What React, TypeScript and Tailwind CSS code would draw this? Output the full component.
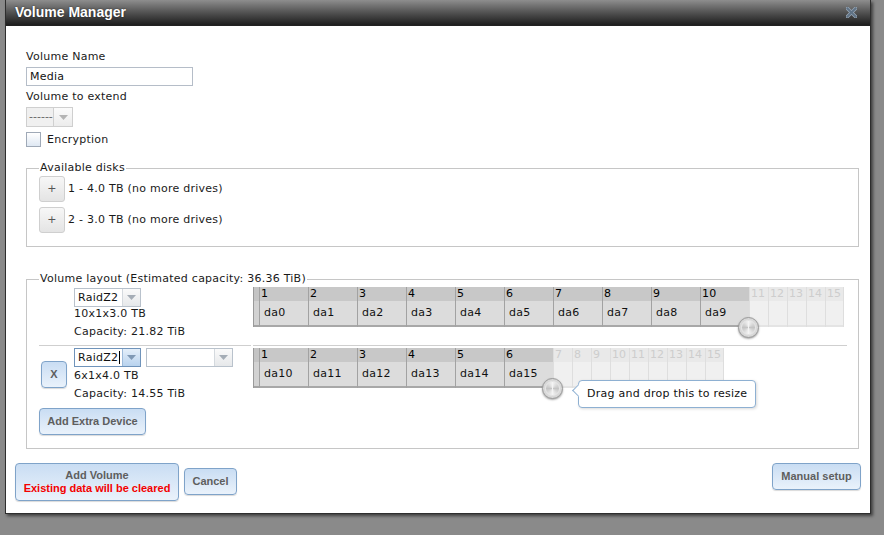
import React from 'react';

function Arrow({ color = '#9aa4ae' }: { color?: string }) {
  return (
    <svg width="9" height="5" viewBox="0 0 9 5">
      <path d="M0 0 L9 0 L4.5 5 Z" fill={color} />
    </svg>
  );
}

function Select({ text, wide, focused }: { text: string; wide?: boolean; focused?: boolean }) {
  return (
    <div
      className={
        'flex h-[19px] bg-white border ' +
        (wide ? 'w-[87px] ' : 'w-[67px] ') +
        (focused ? 'border-[#6f93ba]' : 'border-[#b9c2cc]')
      }
    >
      <div className="flex-1 flex items-center pl-[3px] leading-[17px] text-[#111]">
        {text}
        {focused && <span className="inline-block w-[1px] h-[13px] bg-black ml-[1px]" />}
      </div>
      <div
        className={
          'w-[18px] flex items-center justify-center border-l ' +
          (focused
            ? 'border-[#9dbbdb] bg-linear-to-b from-[#e4effa] to-[#b9d3ee]'
            : 'border-[#d4d9de] bg-linear-to-b from-[#fafafa] to-[#e6e8ea]')
        }
      >
        <Arrow color={focused ? '#7f99b5' : '#a5adb6'} />
      </div>
    </div>
  );
}

function BlueBtn({ children, cls }: { children: React.ReactNode; cls: string }) {
  return (
    <div
      className={
        "flex flex-col items-center justify-center rounded-[4px] border border-[#7fa3c9] bg-linear-to-b from-[#c9ddf3] to-[#eaf2fb] shadow-[0_1px_1px_rgba(0,0,0,0.15)] font-['Liberation_Sans',sans-serif] font-bold tracking-normal text-[11px] text-[#5e5e5e] whitespace-nowrap " +
        cls
      }
    >
      {children}
    </div>
  );
}

function GrayBtn({ children, cls }: { children: React.ReactNode; cls: string }) {
  return (
    <div
      className={
        'flex items-center justify-center rounded-[3px] border border-[#cfcfcf] bg-linear-to-b from-[#f7f7f7] to-[#e4e4e4] text-[#555] ' +
        cls
      }
    >
      {children}
    </div>
  );
}

function Knob({ left }: { left: number }) {
  return (
    <div
      className="absolute top-[30px] w-[21px] h-[21px] rounded-full border border-[#9c9c9c] bg-[#d8d8d8] shadow-[0_1px_2px_rgba(0,0,0,0.35)] flex items-center justify-center"
      style={{ left }}
    >
      <div className="w-[15px] h-[15px] rounded-full bg-[conic-gradient(#f4f4f4,#c4c4c4,#f4f4f4,#c4c4c4,#f4f4f4)] border border-[#e8e8e8]" />
    </div>
  );
}

function DiskGrid({
  names,
  total,
  tooltip,
}: {
  names: string[];
  total: number;
  tooltip?: boolean;
}) {
  const inactive: number[] = [];
  for (let i = names.length + 1; i <= total; i++) inactive.push(i);
  return (
    <div className="relative flex w-fit">
      <div className="w-[6px] flex flex-col border-l border-[#9a9a9a]">
        <div className="h-[14px] bg-[#c4c4c4]" />
        <div className="h-[24px] bg-[#d2d2d2]" />
        <div className="h-[2px] bg-[#a4a4a4]" />
      </div>
      {names.map((n, i) => (
        <div key={n} className="w-[49px] flex flex-col border-l border-[#a2a2a2]">
          <div className="h-[14px] bg-[#c8c8c8] leading-[14px] pl-[1px] text-black">{i + 1}</div>
          <div className="h-[24px] bg-[#dcdcdc] leading-[24px] pl-[4px] text-[#111]">{n}</div>
          <div className="h-[2px] bg-[#a8a8a8]" />
        </div>
      ))}
      {inactive.map((k, i) => (
        <div
          key={k}
          className={
            'w-[19px] flex flex-col border-l border-[#dedede] ' +
            (i === inactive.length - 1 ? 'border-r' : '')
          }
        >
          <div className="h-[14px] bg-[#e9e9e9] leading-[14px] pl-[1px] tracking-normal text-[#cdcdcd]">{k}</div>
          <div className="h-[24px] bg-[#f0f0f0]" />
          <div className="h-[2px] bg-[#e4e4e4]" />
        </div>
      ))}
      <Knob left={6 + names.length * 49 - 11} />
      {tooltip && (
        <div className="absolute left-[325px] top-[32px] w-[178px] h-[28px] rounded-[4px] border border-[#8eb0d2] bg-white shadow-[1px_1px_3px_rgba(0,0,0,0.15)] pl-[8px] leading-[26px] text-[#111] whitespace-nowrap">
          <div className="absolute left-[-5px] top-[5px] w-[9px] h-[9px] bg-white border-l border-b border-[#8eb0d2] rotate-45" />
          <span className="relative">Drag and drop this to resize</span>
        </div>
      )}
    </div>
  );
}

export default function App() {
  return (
    <div className="w-[884px] h-[535px] overflow-hidden bg-[#8a8a8a] pl-[5px] font-['DejaVu_Sans',sans-serif] text-[11px] tracking-[0.25px] text-[#1a1a1a]">
      <div className="w-[866px] h-[514px] bg-white border-l border-r border-b border-[#2e2e2e] shadow-[2px_2px_3px_rgba(0,0,0,0.55)] flex flex-col">
        {/* title bar */}
        <div className="h-[26px] shrink-0 bg-linear-to-b from-[#8e8e8e] to-[#1e1e1e] border-b border-[#222] flex items-center justify-between pl-[9px] pr-[13px]">
          <span className="text-white font-bold text-[14px] tracking-normal font-['Liberation_Sans',sans-serif] [text-shadow:0_0_2px_rgba(0,0,0,0.6)]">Volume Manager</span>
          <svg width="11" height="11" viewBox="0 0 11 11">
            <path d="M1.5 1.5 L9.5 9.5 M9.5 1.5 L1.5 9.5" stroke="#9aa9b8" strokeWidth="3.4" strokeLinecap="square" />
            <path d="M1.5 1.5 L9.5 9.5 M9.5 1.5 L1.5 9.5" stroke="#5f7285" strokeWidth="2" strokeLinecap="square" />
          </svg>
        </div>

        {/* form */}
        <div className="pl-[20px] pt-[24px] flex flex-col">
          <div className="leading-[14px]">Volume Name</div>
          <div className="mt-[3px] w-[167px] h-[19px] border border-[#b5bdc8] pl-[3px] leading-[17px] text-[#111]">Media</div>
          <div className="mt-[4px] leading-[14px]">Volume to extend</div>
          <div className="mt-[3px] w-[47px] h-[20px] flex border border-[#cfcfcf] bg-[#f0f0f0]">
            <div className="flex-1 leading-[18px] pl-[2px] text-[#666] tracking-normal">------</div>
            <div className="w-[19px] border-l border-[#d0d0d0] bg-linear-to-b from-[#fbfbfb] to-[#ececec] flex items-center justify-center">
              <Arrow color="#b4b4b4" />
            </div>
          </div>
          <div className="mt-[5px] flex items-center h-[15px]">
            <div className="w-[15px] h-[15px] border border-[#9fa9b7] bg-linear-to-b from-[#ffffff] to-[#dfe8f3]" />
            <span className="ml-[6px] leading-[14px]">Encryption</span>
          </div>

          {/* Available disks */}
          <fieldset className="mt-[14px] w-[833px] border border-[#c6c6c6] pl-[12px] pb-[13px]">
            <legend className="px-[1px] leading-[14px]">Available disks</legend>
            <div className="pt-[1px] flex flex-col gap-[5px]">
              <div className="flex items-center">
                <GrayBtn cls="w-[26px] h-[26px]">+</GrayBtn>
                <span className="ml-[3px]">1 - 4.0 TB (no more drives)</span>
              </div>
              <div className="flex items-center">
                <GrayBtn cls="w-[26px] h-[26px]">+</GrayBtn>
                <span className="ml-[3px]">2 - 3.0 TB (no more drives)</span>
              </div>
            </div>
          </fieldset>

          {/* Volume layout */}
          <fieldset className="mt-[25px] w-[833px] border border-[#c6c6c6] pl-[12px] pb-[13px]">
            <legend className="px-[1px] leading-[14px]">Volume layout (Estimated capacity: 36.36 TiB)</legend>
            <div className="pt-[1px] flex flex-col">
              {/* row 1 */}
              <div className="flex gap-[2px] h-[59px]">
                <div className="w-[212px] border-b border-[#cfcfcf] flex">
                  <div className="w-[35px]" />
                  <div className="pt-[1px] flex flex-col">
                    <Select text="RaidZ2" />
                    <div className="leading-[14px]">10x1x3.0 TB</div>
                    <div className="mt-[4px] leading-[14px]">Capacity: 21.82 TiB</div>
                  </div>
                </div>
                <div className="w-[594px] border-b border-[#cfcfcf]">
                  <DiskGrid names={['da0', 'da1', 'da2', 'da3', 'da4', 'da5', 'da6', 'da7', 'da8', 'da9']} total={15} />
                </div>
              </div>
              {/* row 2 */}
              <div className="flex gap-[2px] h-[56px]">
                <div className="w-[212px] flex">
                  <div className="w-[35px] flex items-center pl-[2px]">
                    <BlueBtn cls="w-[26px] h-[27px]">X</BlueBtn>
                  </div>
                  <div className="pt-[2px] flex flex-col">
                    <div className="flex gap-[5px]">
                      <Select text="RaidZ2" focused />
                      <Select text="" wide />
                    </div>
                    <div className="mt-[2px] leading-[14px]">6x1x4.0 TB</div>
                    <div className="mt-[4px] leading-[14px]">Capacity: 14.55 TiB</div>
                  </div>
                </div>
                <div className="pt-[2px]">
                  <DiskGrid names={['da10', 'da11', 'da12', 'da13', 'da14', 'da15']} total={15} tooltip />
                </div>
              </div>
              <div className="mt-[6px]">
                <BlueBtn cls="w-[107px] h-[27px]">Add Extra Device</BlueBtn>
              </div>
            </div>
          </fieldset>
        </div>

        {/* bottom buttons */}
        <div className="mt-[14px] pl-[9px] pr-[9px] flex items-start">
          <BlueBtn cls="w-[164px] h-[38px] leading-[13px]">
            <span>Add Volume</span>
            <span className="text-[#f40000]">Existing data will be cleared</span>
          </BlueBtn>
          <div className="ml-[5px] mt-[5px]">
            <BlueBtn cls="w-[53px] h-[27px]">Cancel</BlueBtn>
          </div>
          <div className="ml-auto">
            <BlueBtn cls="w-[89px] h-[27px]">Manual setup</BlueBtn>
          </div>
        </div>
      </div>
    </div>
  );
}
